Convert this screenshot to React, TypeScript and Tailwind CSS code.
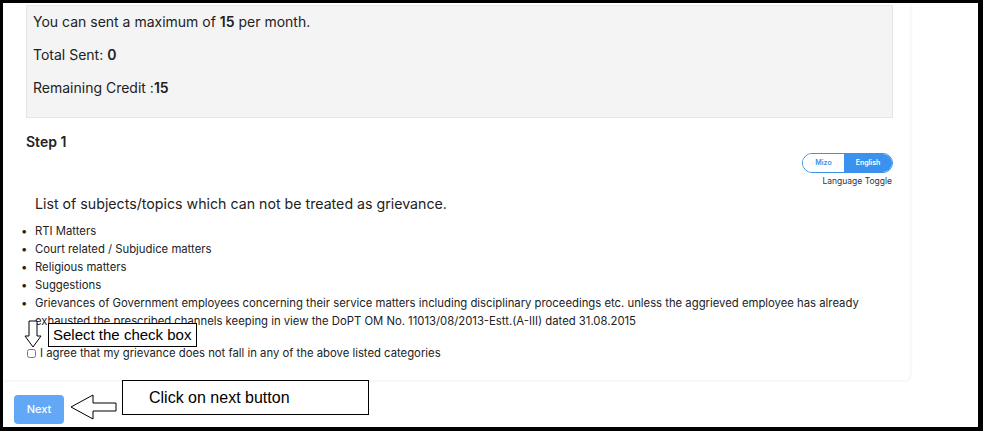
import React from 'react';

const items = [
  'RTI Matters',
  'Court related / Subjudice matters',
  'Religious matters',
  'Suggestions',
  'Grievances of Government employees concerning their service matters including disciplinary proceedings etc. unless the aggrieved employee has already exhausted the prescribed channels keeping in view the DoPT OM No. 11013/08/2013-Estt.(A-III) dated 31.08.2015',
];

const DownArrow = () => (
  <svg width="18" height="28" viewBox="0 0 18 28" className="absolute left-[21px] top-[317px]">
    <path d="M5 1 H13 V16 H17 L9 27 L1 16 H5 Z" fill="white" stroke="black" strokeWidth="1" />
  </svg>
);

const LeftArrow = () => (
  <svg width="48" height="28" viewBox="0 0 48 28" className="absolute left-[67px] top-[390px]">
    <path d="M1 14 L23 2 V10 H46 V18 H23 V26 Z" fill="white" stroke="black" strokeWidth="1" />
  </svg>
);

const App: React.FC = () => {
  return (
    <div className="relative w-[983px] h-[431px] overflow-hidden bg-white border-t-[3px] border-l-[3px] border-r-[5px] border-b-4 border-black font-['Inter',sans-serif] text-[#222]">
      {/* main card */}
      <div className="w-[907px] h-[377px] bg-white shadow-[1px_1px_3px_rgba(0,0,0,0.06)] rounded-br-md pl-[23px] pr-[17px] pt-[2px]">
        <div className="bg-[#f4f4f4] border border-[#e6e6e6] h-[113px] px-[6px] pt-[6px] text-[14px]">
          <p className="leading-5 mb-[13px]">
            You can sent a maximum of <span className="font-semibold">15</span> per month.
          </p>
          <p className="leading-5 mb-[13px]">
            Total Sent: <span className="font-semibold">0</span>
          </p>
          <p className="leading-5">
            Remaining Credit :<span className="font-semibold">15</span>
          </p>
        </div>

        <h3 className="mt-[14px] text-[14px] leading-5 font-semibold">Step 1</h3>

        <div className="flex flex-col items-end mt-[1px]">
          <div className="flex h-[20px] w-[91px] rounded-full border border-[#3a92ee] overflow-hidden text-[7px] font-semibold">
            <div className="w-[41px] flex items-center justify-center text-[#3a92ee] bg-white">Mizo</div>
            <div className="flex-1 flex items-center justify-center text-white bg-[#3a92ee]">English</div>
          </div>
          <span className="text-[8.5px] leading-3 mt-[2px] mr-[1px] text-[#333]">Language Toggle</span>
        </div>

        <p className="ml-[9px] mt-[7px] text-[14.2px] leading-5">
          List of subjects/topics which can not be treated as grievance.
        </p>

        <ul className="ml-[-5px] mt-[8px] text-[11.3px] leading-[18px]">
          {items.map((t) => (
            <li key={t} className="flex">
              <span className="w-[14px] shrink-0">•</span>
              <span>{t}</span>
            </li>
          ))}
        </ul>

        <label className="flex items-center gap-[4px] mt-[15px] text-[11.3px] leading-4">
          <input type="checkbox" className="w-[9px] h-[9px] m-0 ml-[1px]" />
          <span>I agree that my grievance does not fall in any of the above listed categories</span>
        </label>
      </div>

      <div className="pl-[11px] pt-[15px]">
        <button className="w-[50px] h-[29px] rounded-[4px] bg-[#62a8f7] text-white text-[11px] font-medium">Next</button>
      </div>

      {/* annotations */}
      <DownArrow />
      <div className="absolute left-[45px] top-[320px] w-[149px] h-[24px] border border-black bg-white font-['Liberation_Sans',Arial,sans-serif] text-[15px] leading-[22px] pl-[4px] text-black whitespace-nowrap">
        Select the check box
      </div>
      <LeftArrow />
      <div className="absolute left-[119px] top-[377px] w-[247px] h-[35px] border border-black bg-white font-['Liberation_Sans',Arial,sans-serif] text-[16px] leading-[33px] pl-[26px] text-black whitespace-nowrap">
        Click on next button
      </div>
    </div>
  );
};

export default App;
